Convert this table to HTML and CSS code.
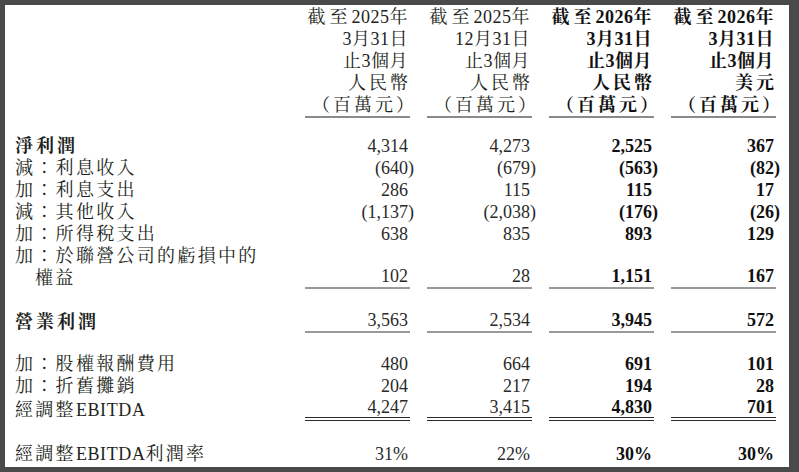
FILE: index.html
```html
<!DOCTYPE html>
<html lang="zh-Hant">
<head>
<meta charset="utf-8">
<link rel="stylesheet" href="styles.css">
</head>
<body>
<div class="page">
  <div class="row head">
    <div class="lab"></div>
    <div class="hc ul"><div><span class="sp">截至</span>2025年</div><div>3月31日</div><div>止3個月</div><div class="wide">人民幣</div><div class="par">（百萬元）</div></div>
    <div class="hc ul"><div><span class="sp">截至</span>2025年</div><div>12月31日</div><div>止3個月</div><div class="wide">人民幣</div><div class="par">（百萬元）</div></div>
    <div class="hc ul b"><div><span class="sp">截至</span>2026年</div><div>3月31日</div><div>止3個月</div><div class="wide">人民幣</div><div class="par">（百萬元）</div></div>
    <div class="hc ul b"><div><span class="sp">截至</span>2026年</div><div>3月31日</div><div>止3個月</div><div class="wide">美元</div><div class="par">（百萬元）</div></div>
  </div>

  <div class="row first">
    <div class="lab strong">淨利潤</div>
    <div class="n">4,314</div><div class="n">4,273</div><div class="n b">2,525</div><div class="n b">367</div>
  </div>
  <div class="row">
    <div class="lab">減：利息收入</div>
    <div class="n">(640<span class="rp">)</span></div><div class="n">(679<span class="rp">)</span></div><div class="n b">(563<span class="rp">)</span></div><div class="n b">(82<span class="rp">)</span></div>
  </div>
  <div class="row">
    <div class="lab">加：利息支出</div>
    <div class="n">286</div><div class="n">115</div><div class="n b">115</div><div class="n b">17</div>
  </div>
  <div class="row">
    <div class="lab">減：其他收入</div>
    <div class="n">(1,137<span class="rp">)</span></div><div class="n">(2,038<span class="rp">)</span></div><div class="n b">(176<span class="rp">)</span></div><div class="n b">(26<span class="rp">)</span></div>
  </div>
  <div class="row">
    <div class="lab">加：所得稅支出</div>
    <div class="n">638</div><div class="n">835</div><div class="n b">893</div><div class="n b">129</div>
  </div>
  <div class="row">
    <div class="lab">加：於聯營公司的虧損中的<br><span class="indent">權益</span></div>
    <div class="n ul">102</div><div class="n ul">28</div><div class="n b ul">1,151</div><div class="n b ul">167</div>
  </div>

  <div class="row gap">
    <div class="lab strong">營業利潤</div>
    <div class="n ul">3,563</div><div class="n ul">2,534</div><div class="n b ul">3,945</div><div class="n b ul">572</div>
  </div>

  <div class="row gap">
    <div class="lab">加：股權報酬費用</div>
    <div class="n">480</div><div class="n">664</div><div class="n b">691</div><div class="n b">101</div>
  </div>
  <div class="row">
    <div class="lab">加：折舊攤銷</div>
    <div class="n">204</div><div class="n">217</div><div class="n b">194</div><div class="n b">28</div>
  </div>
  <div class="row tot">
    <div class="lab">經調整<span class="lat">EBITDA</span></div>
    <div class="n dl">4,247</div><div class="n dl">3,415</div><div class="n b dl">4,830</div><div class="n b dl">701</div>
  </div>

  <div class="row last">
    <div class="lab">經調整<span class="lat">EBITDA</span>利潤率</div>
    <div class="n">31%</div><div class="n">22%</div><div class="n b">30%</div><div class="n b">30%</div>
  </div>
</div>
</body>
</html>
```

FILE: styles.css
```css
html, body {
  margin: 0;
  padding: 0;
}
body {
  background: #4a4a4a;
  width: 799px;
  height: 472px;
  overflow: hidden;
}
.page {
  box-sizing: border-box;
  margin: 5px 10px 5px 5px;
  width: 784px;
  height: 462px;
  background: #ffffff;
  padding: 1px 13px 0 10px;
  font-family: "Liberation Serif", "Noto Serif CJK TC", "Noto Sans CJK TC", serif;
  font-size: 18px;
  line-height: 22px;
  color: #231f20;
}
.row {
  display: grid;
  grid-template-columns: 1fr repeat(4, 105px);
  column-gap: 17px;
  align-items: end;
}
.lab {
  letter-spacing: 2.3px;
  white-space: nowrap;
}
.lab .lat {
  letter-spacing: 0.6px;
}
.strong {
  font-weight: bold;
  letter-spacing: 3px;
}
.indent {
  padding-left: 20px;
}
.hc {
  display: flex;
  flex-direction: column;
  align-items: flex-end;
  white-space: nowrap;
  letter-spacing: 0.5px;
  padding-right: 2px;
}
.hc .sp {
  letter-spacing: 4px;
}
.hc .wide {
  letter-spacing: 3px;
  margin-right: -3px;
}
.hc .par {
  margin-right: -9px;
  letter-spacing: 3px;
}
.n {
  text-align: right;
  padding-right: 2px;
  color: #2a2a2a;
}
.b {
  font-weight: bold;
  color: #111;
}
.rp {
  margin-right: -6px;
}
.ul {
  border-bottom: 2px solid #9a9a9a;
}
.head .ul {
  border-bottom-color: #8a8a8a;
}
.first {
  margin-top: 17px;
}
.gap {
  margin-top: 20px;
}
.tot .n {
  line-height: 20px;
}
.dl {
  border-bottom: 4px double #2a2a2a;
}
.last {
  margin-top: 22px;
}
```
